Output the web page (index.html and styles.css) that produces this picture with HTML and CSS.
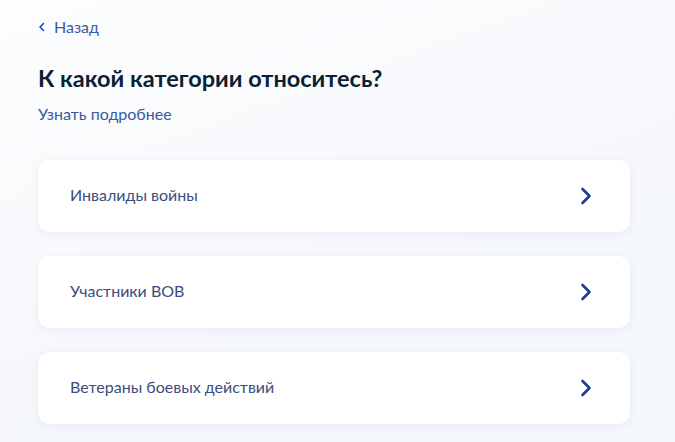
FILE: index.html
```html
<!DOCTYPE html>
<html lang="ru">
<head>
<meta charset="utf-8">
<link rel="stylesheet" href="styles.css">
</head>
<body>
<main class="page">
  <a class="back" href="#">
    <svg class="back-icon" width="8" height="10" viewBox="0 0 8 10"><path d="M5.5 1.5 L2 5 L5.5 8.5" fill="none" stroke="#0d4cd3" stroke-width="1.6" stroke-linecap="round" stroke-linejoin="round"/></svg>
    <span>Назад</span>
  </a>
  <h1 class="title">К какой категории относитесь?</h1>
  <a class="more" href="#">Узнать подробнее</a>
  <ul class="list">
    <li class="card"><span class="card-text">Инвалиды войны</span><svg class="chev" width="12" height="18" viewBox="0 0 12 18"><path d="M2.5 2 L9.5 9 L2.5 16" fill="none" stroke="#1c3a96" stroke-width="2.6" stroke-linecap="round" stroke-linejoin="round"/></svg></li>
    <li class="card"><span class="card-text">Участники ВОВ</span><svg class="chev" width="12" height="18" viewBox="0 0 12 18"><path d="M2.5 2 L9.5 9 L2.5 16" fill="none" stroke="#1c3a96" stroke-width="2.6" stroke-linecap="round" stroke-linejoin="round"/></svg></li>
    <li class="card"><span class="card-text">Ветераны боевых действий</span><svg class="chev" width="12" height="18" viewBox="0 0 12 18"><path d="M2.5 2 L9.5 9 L2.5 16" fill="none" stroke="#1c3a96" stroke-width="2.6" stroke-linecap="round" stroke-linejoin="round"/></svg></li>
  </ul>
</main>
</body>
</html>
```
FILE: styles.css
```css
html, body {
  margin: 0;
  padding: 0;
}
body {
  background: linear-gradient(160deg, #fcfdfe 0%, #f5f7fb 60%, #f4f7fc 100%);
  font-family: Lato, "Noto Sans", sans-serif;
  width: 675px;
  height: 442px;
  overflow: hidden;
}
.page {
  padding: 17px 45px 0 38px;
  display: flex;
  flex-direction: column;
}
.back {
  display: flex;
  align-items: center;
  gap: 8px;
  text-decoration: none;
  font-size: 16px;
  line-height: 20px;
  color: #3a5a9e;
}
.back-icon {
  display: block;
}
.title {
  margin: 26px 0 0;
  font-size: 23.5px;
  line-height: 30px;
  font-weight: 700;
  color: #0b1f33;
}
.more {
  margin-top: 11px;
  font-size: 16px;
  line-height: 20px;
  color: #3a5a9e;
  text-decoration: none;
}
.list {
  list-style: none;
  margin: 36px 0 0;
  padding: 0;
  display: flex;
  flex-direction: column;
  gap: 24px;
}
.card {
  background: #fff;
  border-radius: 12px;
  height: 72px;
  box-sizing: border-box;
  padding: 0 38px 0 32px;
  display: flex;
  align-items: center;
  justify-content: space-between;
  box-shadow: 0 2px 8px rgba(50, 80, 140, 0.07);
}
.card-text {
  font-size: 16px;
  line-height: 20px;
  padding-bottom: 3px;
  color: #3b4e7b;
}
.chev {
  display: block;
}
```
